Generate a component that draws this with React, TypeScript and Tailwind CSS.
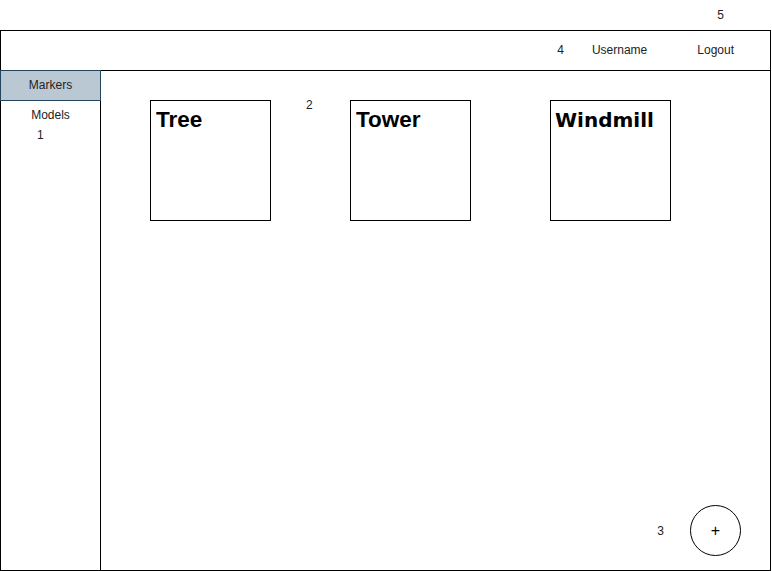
const cards = ['Tree', 'Tower', 'Windmill'];

export default function App() {
  return (
    <div
      className="relative w-[772px] h-[571px] bg-white text-[12px] text-[#222]"
      style={{ fontFamily: '"Liberation Sans", Arial, sans-serif' }}
    >
      {/* top annotation row */}
      <div className="h-[30px] flex items-center justify-end pr-[48px]">
        <span className="leading-[14px]">5</span>
      </div>

      {/* frame */}
      <div className="w-[771px] h-[541px] border border-black flex flex-col">
        {/* header */}
        <div className="h-[40px] shrink-0 border-b border-black flex items-center justify-end pr-[36px] pb-[2px]">
          <span className="leading-[14px] mr-[28px]">4</span>
          <span className="leading-[14px] mr-[50px]">Username</span>
          <span className="leading-[14px]">Logout</span>
        </div>

        <div className="flex flex-1 min-h-0">
          {/* sidebar */}
          <div className="w-[100px] shrink-0 border-r border-black flex flex-col">
            <div className="-mt-px -ml-px w-[101px] h-[31px] pb-[1px] bg-[#bac8d3] border border-[#23445d] flex items-center justify-center">
              <span className="leading-[14px]">Markers</span>
            </div>
            <span className="mt-[7px] leading-[14px] text-center">Models</span>
            <span className="mt-[6px] leading-[14px] pl-[36px]">1</span>
          </div>

          {/* main */}
          <div className="relative flex-1 pl-[49px] pt-[29px]">
            <div className="flex gap-[79px]">
              {cards.map((c, i) => (
                <div key={c} className="relative w-[121px] h-[121px] border border-black pl-[5px] pt-[8px]">
                  {c === 'Windmill' ? (
                    <span
                      className="block text-[20px] font-bold leading-[22px] text-black -ml-px"
                      style={{ fontFamily: '"DejaVu Sans", Verdana, sans-serif' }}
                    >
                      {c}
                    </span>
                  ) : (
                    <span className="block text-[22.5px] font-bold leading-[22px] text-black">{c}</span>
                  )}
                  {i === 0 && (
                    <span className="absolute left-[155px] top-[-3px] leading-[14px]">2</span>
                  )}
                </div>
              ))}
            </div>

            <div className="absolute right-[29px] bottom-[14px] flex items-center gap-[26px]">
              <span className="leading-[14px]">3</span>
              <button className="w-[51px] h-[51px] rounded-full border border-black flex items-center justify-center text-[16px] text-black leading-none">
                +
              </button>
            </div>
          </div>
        </div>
      </div>
    </div>
  );
}
